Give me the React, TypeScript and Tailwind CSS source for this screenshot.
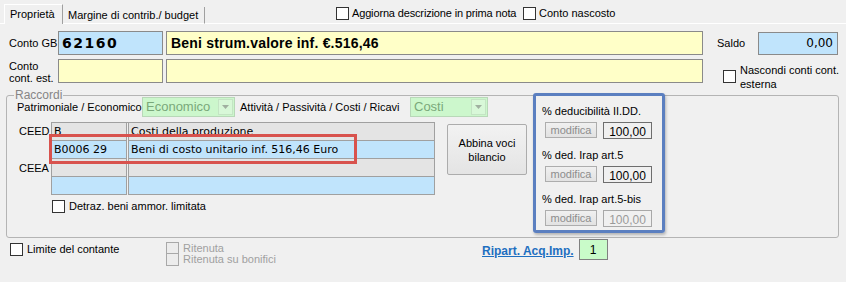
import React from "react";

const Check = ({ disabled = false, className = "" }: { disabled?: boolean; className?: string }) => (
  <span
    className={`inline-block shrink-0 w-[13px] h-[13px] border ${
      disabled ? "border-[#a8a8a8] bg-[#ececec]" : "border-[#333333] bg-white"
    } ${className}`}
  />
);

const Combo = ({ text, w }: { text: string; w: string }) => (
  <div className={`${w} h-[20px] flex items-center border border-[#b8d8b8] bg-[#ccf7cc]`}>
    <span className="flex-1 pl-[3px] text-[13px] text-[#7aa87a] leading-[16px]">{text}</span>
    <span className="w-[15px] h-[16px] mr-[1px] flex items-center justify-center bg-[#d8f8d8] border border-[#c4e4c4]">
      <svg width="7" height="4" viewBox="0 0 7 4">
        <path d="M0 0 L7 0 L3.5 4 Z" fill="#a0b0a0" />
      </svg>
    </span>
  </div>
);

const Group = ({ label, disabled = false, first = false }: { label: string; disabled?: boolean; first?: boolean }) => (
  <div className={`flex flex-col ${first ? "" : "mt-[9px]"}`}>
    <span className="leading-[14px] text-[11px]">{label}</span>
    <div className="flex items-start mt-[4px] ml-[3px]">
      <div className="w-[52px] h-[16px] flex items-center justify-center border border-[#adadad] bg-gradient-to-b from-[#f0f0f0] to-[#e2e2e2] text-[11px] text-[#8d8d8d]">
        modifica
      </div>
      <div
        className={`ml-[6px] w-[49px] h-[17px] flex items-center justify-center border text-[12px] ${
          disabled ? "border-[#a8a8a8] text-[#9a9a9a]" : "border-[#6e6e6e] text-black"
        }`}
      >
        <span className="mt-[2px]">100,00</span>
      </div>
    </div>
  </div>
);

export default function App() {
  const rows = [
    { a: "B", b: "Costi della produzione", bg: "bg-[#e4e4e4]" },
    { a: "B0006 29", b: "Beni di costo unitario inf. 516,46 Euro", bg: "bg-[#c0e4fc]" },
    { a: "", b: "", bg: "bg-[#e4e4e4]" },
    { a: "", b: "", bg: "bg-[#c0e4fc]" },
  ];
  return (
    <div className="w-[846px] h-[282px] bg-[#f0f0f0] overflow-hidden font-['Liberation_Sans',Arial,sans-serif] text-[11px] text-black leading-none">
      {/* tab strip */}
      <div className="flex h-[24px]">
        <div className="w-[4px] border-b border-white" />
        <div className="mt-[4px] h-[20px] w-[59px] border-t border-l border-white border-r border-r-[#a0a0a0] flex items-center pl-[5px] text-[11px]">
          Proprietà
        </div>
        <div className="mt-[7px] h-[17px] w-[142px] border-r border-r-[#a0a0a0] border-b border-b-white flex items-center pl-[5px]">
          Margine di contrib./ budget
        </div>
        <div className="flex-1 border-b border-white flex items-start pt-[7px] pl-[131px]">
          <Check />
          <span className="ml-[3px] mt-[1px] w-[171px] tracking-[-0.15px]">Aggiorna descrizione in prima nota</span>
          <Check />
          <span className="ml-[3px] mt-[1px]">Conto nascosto</span>
        </div>
      </div>

      {/* Conto GB */}
      <div className="flex items-center mt-[7px] h-[24px]">
        <span className="w-[58px] pl-[9px]">Conto GB</span>
        <div className="w-[105px] h-[24px] border border-[#8a8a8a] bg-[#c0e4fc] flex items-center pl-[3px] font-['DejaVu_Sans',sans-serif] font-bold text-[14px] tracking-[1.5px]">
          62160
        </div>
        <div className="ml-[3px] w-[537px] h-[24px] border border-[#8a8a8a] bg-[#ffffc8] flex items-center pl-[4px] font-bold text-[14px] tracking-[0.2px]">
          Beni strum.valore inf. €.516,46
        </div>
        <span className="ml-[14px] w-[41px]">Saldo</span>
        <div className="w-[80px] h-[23px] border border-[#8a8a8a] bg-[#c0e4fc] flex items-center justify-end pr-[4px] font-['DejaVu_Sans',sans-serif] text-[12px]">
          0,00
        </div>
      </div>

      {/* Conto cont. est. */}
      <div className="flex items-start mt-[4px] h-[24px]">
        <span className="w-[58px] pl-[9px] pt-[1px] leading-[12px]">
          Conto
          <br />
          cont. est.
        </span>
        <div className="w-[105px] h-[24px] border border-[#8a8a8a] bg-[#ffffc8]" />
        <div className="ml-[3px] w-[537px] h-[24px] border border-[#8a8a8a] bg-[#ffffc8]" />
        <Check className="ml-[20px] mt-[11px]" />
        <span className="ml-[4px] mt-[4px] leading-[14px]">
          Nascondi conti cont.
          <br />
          esterna
        </span>
      </div>

      {/* Raccordi */}
      <div className="relative mt-[12px] ml-[6px] w-[833px] h-[143px] border border-[#b4b4b4] rounded-[3px]">
        <span className="absolute left-[7px] -top-[8px] px-[1px] bg-[#f0f0f0] text-[12px] leading-[14px] text-[#858585]">
          Raccordi
        </span>
        <div className="flex pl-[10px]">
          <div className="flex flex-col w-[510px]">
            <div className="flex items-center h-[20px] mt-[1px]">
              <span className="w-[125px]">Patrimoniale / Economico</span>
              <Combo text="Economico" w="w-[93px]" />
              <span className="w-[175px] pl-[5px]">Attività / Passività / Costi / Ricavi</span>
              <Combo text="Costi" w="w-[78px]" />
            </div>
            <div className="flex items-start mt-[5px]">
              <div className="w-[34px] flex flex-col pl-[2px]">
                <span className="mt-[3px] leading-[12px]">CEED</span>
                <span className="mt-[25px] leading-[12px]">CEEA</span>
              </div>
              <div className="relative w-[384px] border-l border-t border-[#a0a0a0] font-['DejaVu_Sans',sans-serif] text-[11px]">
                {rows.map((r, i) => (
                  <div key={i} className="flex h-[18px]">
                    <div className={`w-[75px] border-r border-b border-[#a0a0a0] ${r.bg} flex items-center pl-[2px]`}>
                      {r.a}
                    </div>
                    <div className={`flex-1 ml-[1px] border-l border-r border-b border-[#a0a0a0] ${r.bg} flex items-center pl-[2px]`}>
                      {r.b}
                    </div>
                  </div>
                ))}
                <div className="absolute -left-[3px] top-[11px] w-[308px] h-[30px] border-[3px] border-[#d8524d]" />
              </div>
              <div className="ml-[12px] mt-[2px] w-[80px] h-[51px] border border-[#acacac] rounded-[2px] bg-gradient-to-b from-[#f2f2f2] to-[#e4e4e4] flex items-center justify-center text-center leading-[14px]">
                Abbina voci
                <br />
                bilancio
              </div>
            </div>
            <div className="flex items-center mt-[5px] pl-[35px]">
              <Check />
              <span className="ml-[4px]">Detraz. beni ammor. limitata</span>
            </div>
          </div>
          <div className="ml-[6px] -mt-[3px] w-[132px] h-[140px] border-[3px] border-[#5b7fc0] rounded-[3px] shadow-[1px_2px_3px_rgba(0,0,0,0.25)] flex flex-col pl-[6px] pt-[8px]">
            <Group label="% deducibilità II.DD." first />
            <Group label="% ded. Irap art.5" />
            <Group label="% ded. Irap art.5-bis" disabled />
          </div>
        </div>
      </div>

      {/* bottom row */}
      <div className="flex items-start mt-[5px]">
        <div className="w-[166px] pl-[10px] flex items-center">
          <Check />
          <span className="ml-[4px]">Limite del contante</span>
        </div>
        <div className="w-[316px] flex flex-col">
          <div className="flex items-center h-[11px]">
            <Check disabled className="h-[12px] w-[12px]" />
            <span className="ml-[4px] text-[#a0a0a0]">Ritenuta</span>
          </div>
          <div className="flex items-center h-[11px]">
            <Check disabled className="h-[12px] w-[12px]" />
            <span className="ml-[4px] text-[#a0a0a0]">Ritenuta su bonifici</span>
          </div>
        </div>
        <span className="mt-[1px] leading-[14px] font-bold underline text-[12px] text-[#1e6fc0]">Ripart. Acq.Imp.</span>
        <div className="ml-[5px] -mt-[4px] w-[29px] h-[21px] bg-[#c9fbc9] border border-[#808080] text-[12px] flex justify-center items-center">
          1
        </div>
      </div>
    </div>
  );
}
